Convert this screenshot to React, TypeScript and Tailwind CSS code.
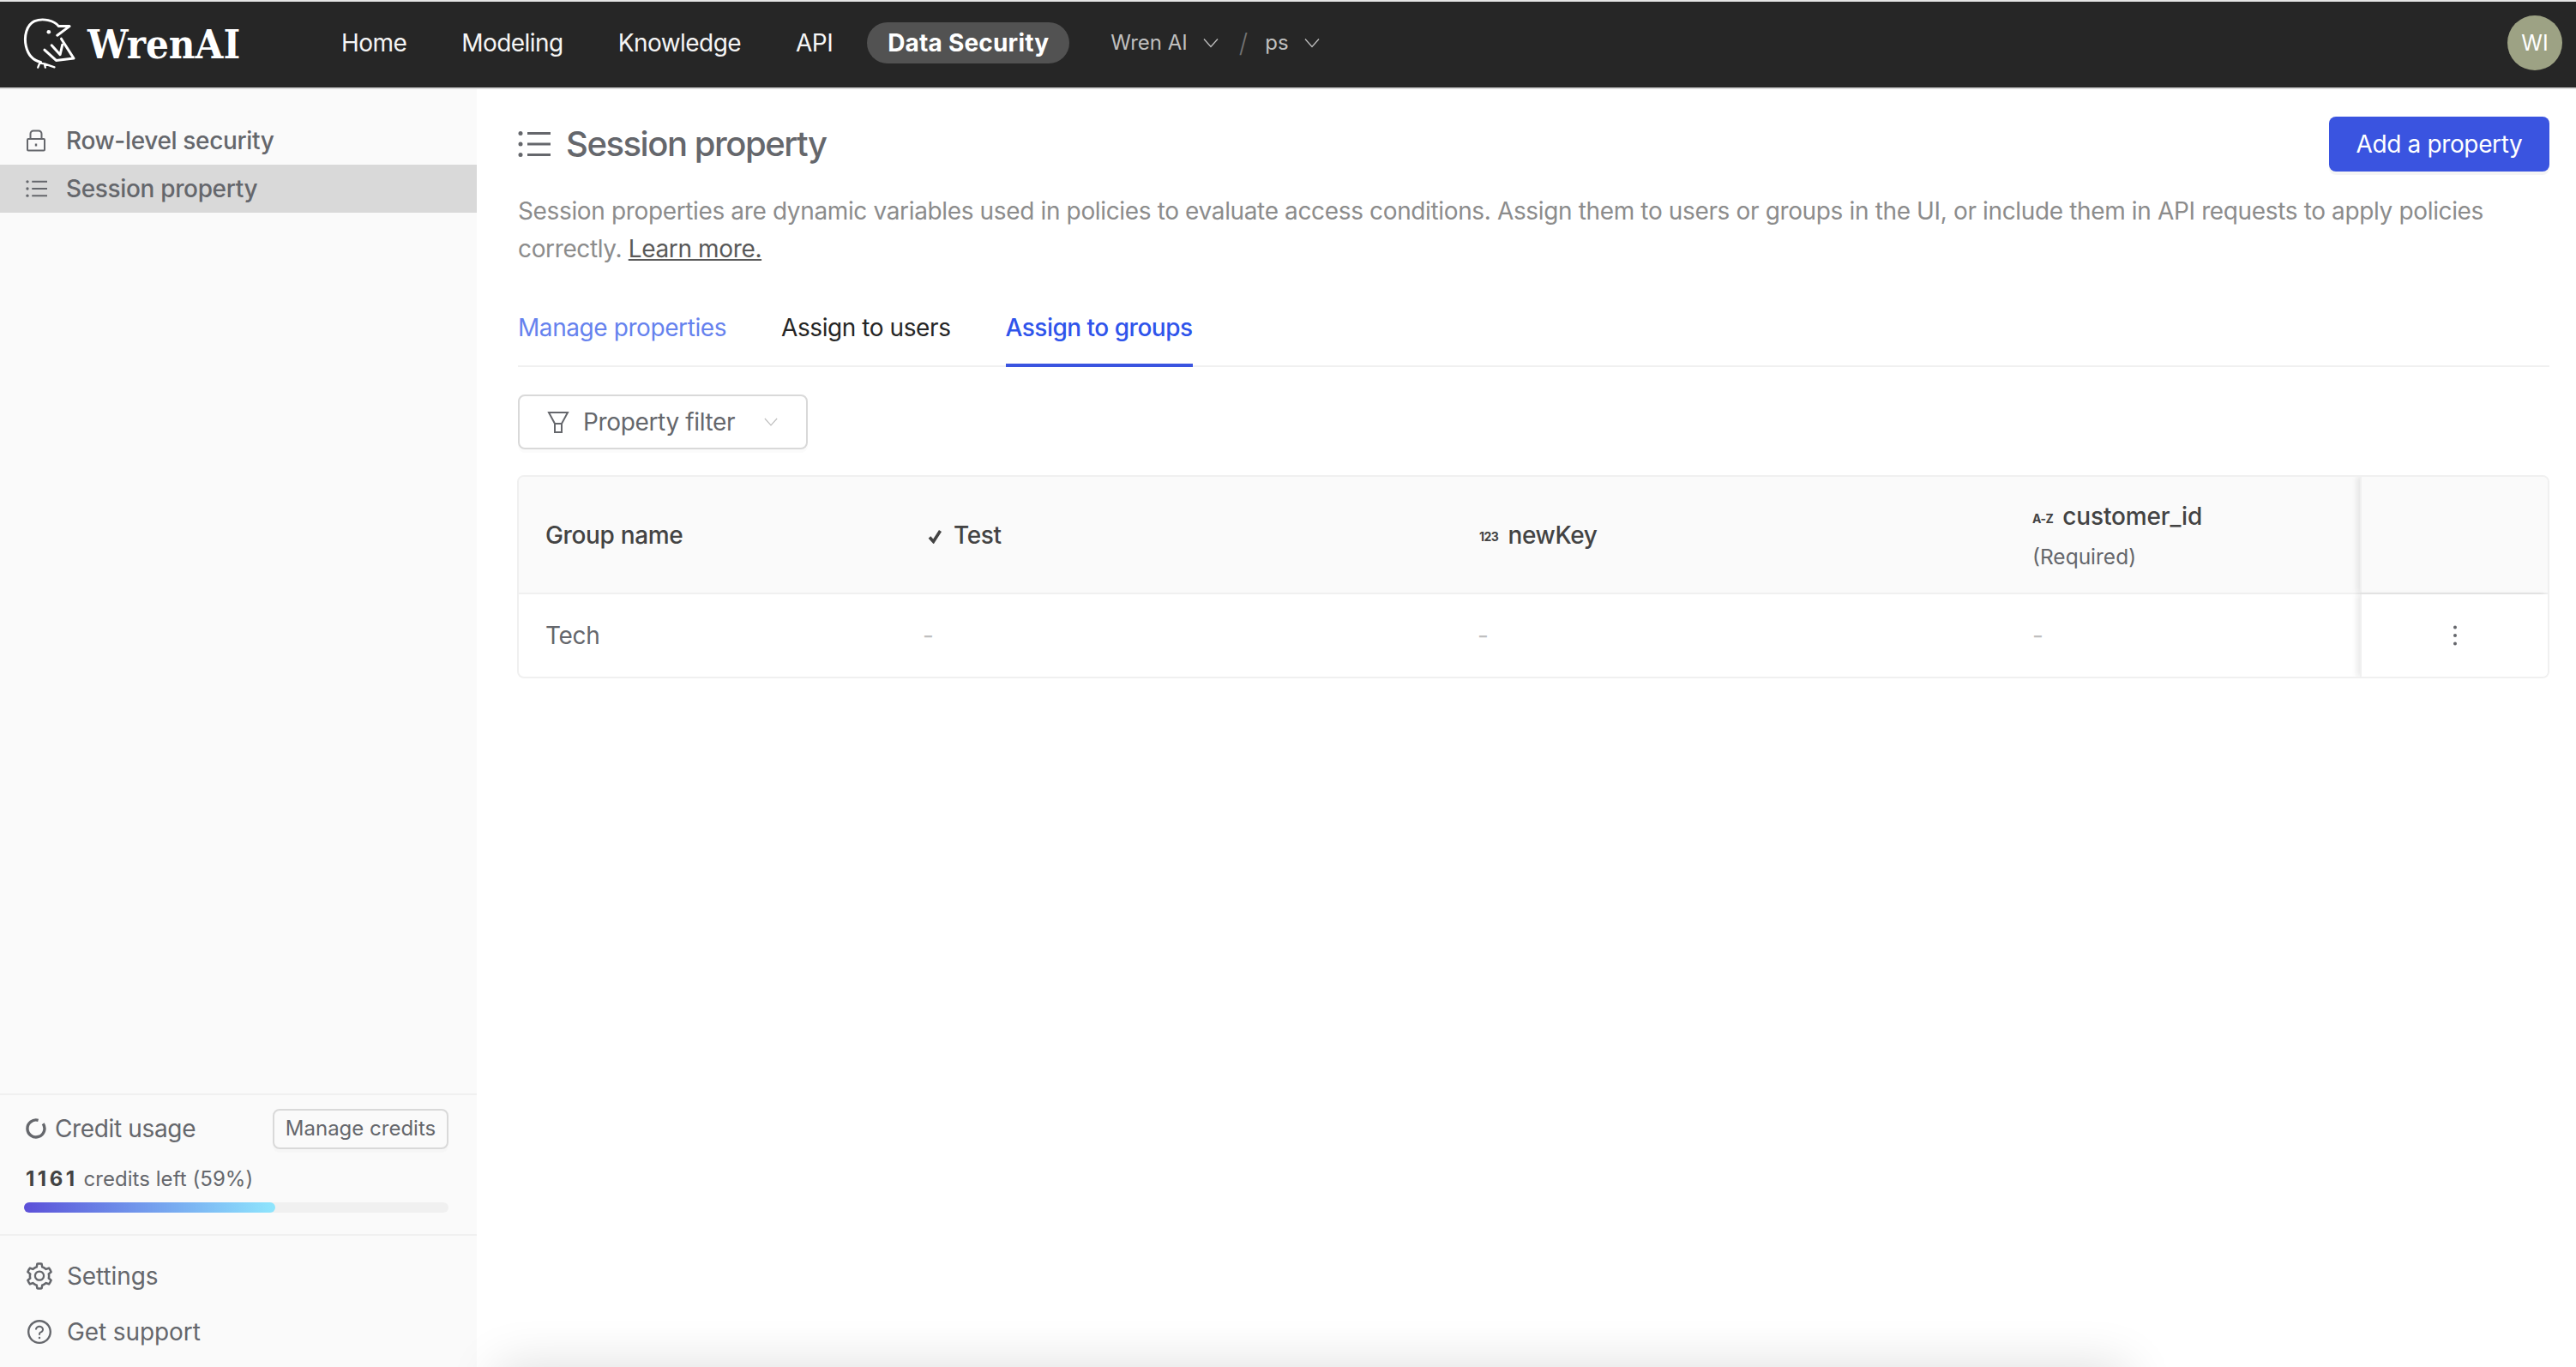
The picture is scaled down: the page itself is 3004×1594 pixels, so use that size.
import { AiOutlineQuestionCircle, AiOutlineSetting } from "react-icons/ai"

const FONT = "font-['Inter','Liberation_Sans',sans-serif]"

function Chevron({ className }: { className: string }) {
  return (
    <svg viewBox="0 0 18 12" className={className} fill="none" stroke="currentColor" strokeWidth="1.3">
      <path d="M1 1.5 9 10.5 17 1.5" />
    </svg>
  )
}

function ListIcon({ className }: { className: string }) {
  return (
    <svg viewBox="0 0 38 30" className={className} fill="none" stroke="currentColor" strokeWidth="2.8">
      <path d="M11 2.5h27M11 15h27M11 27.5h27" />
      <circle cx="3" cy="2.5" r="2.5" fill="currentColor" stroke="none" />
      <circle cx="3" cy="15" r="2.5" fill="currentColor" stroke="none" />
      <circle cx="3" cy="27.5" r="2.5" fill="currentColor" stroke="none" />
    </svg>
  )
}

function LockIcon() {
  return (
    <svg viewBox="0 0 24 26" className="w-[24px] h-[26px]" fill="none" stroke="currentColor" strokeWidth="2">
      <rect x="2" y="11" width="20" height="13.5" rx="1" />
      <path d="M5.5 11V5a3.5 3.5 0 0 1 3.5-3.5h6A3.5 3.5 0 0 1 18.5 5v6" />
      <path d="M12 16.5v3" strokeWidth="2.4" />
    </svg>
  )
}

function FunnelIcon() {
  return (
    <svg viewBox="0 0 26 26" className="w-[26px] h-[26px]" fill="none" stroke="currentColor" strokeWidth="2">
      <path d="M2 2h22l-7 13H9z" />
      <path d="M9 15v10h8V15" />
    </svg>
  )
}

function WrenLogo() {
  return (
    <svg viewBox="80 55 190 190" className="w-[63px] h-[63px] shrink-0" fill="none" stroke="#fff" strokeWidth="9" strokeLinecap="round" strokeLinejoin="round">
      <path d="M200 122 243 90 205 90C190 70 150 60 120 72 92 85 82 125 90 160 97 190 115 210 142 216" />
      <circle cx="170" cy="110" r="7" fill="#fff" stroke="none" />
      <path d="M214 134 258 203 196 210 155 173" />
      <path d="M180 157 210 190 218 155" />
      <path d="M132 235 138 220 155 222 190 234M155 222 158 235" strokeWidth="7" />
    </svg>
  )
}

function NavItem({ label, active }: { label: string; active?: boolean }) {
  return (
    <div className={active ? "h-[48px] px-[24px] flex items-center rounded-full bg-[#525252] text-white font-bold tracking-[0.2px]" : "h-[48px] px-[24px] flex items-center text-[#f5f5f5] tracking-[-0.55px]"}>
      {label}
    </div>
  )
}

function Header() {
  return (
    <header className="h-[100px] shrink-0 bg-[#262626] flex items-center pl-[27px] pr-[16px] pb-[4px] text-[28px] leading-[44px]">
      <div className="w-[347px] flex items-center gap-[12px]">
        <WrenLogo />
        <span className="font-['DejaVu_Serif',serif] font-bold text-white text-[46px] leading-none mt-[4px] origin-left scale-x-[0.92]">WrenAI</span>
      </div>
      <nav className="flex items-center gap-[16px]">
        <NavItem label="Home" />
        <NavItem label="Modeling" />
        <NavItem label="Knowledge" />
        <NavItem label="API" />
        <NavItem label="Data Security" active />
      </nav>
      <div className="ml-[48px] flex items-center text-[24px] text-[#bfbfbf]">
        <span>Wren AI</span>
        <Chevron className="w-[18px] h-[12px] ml-[18px]" />
        <span className="ml-[24px] text-[#737373] text-[30px] font-light">/</span>
        <span className="ml-[20px]">ps</span>
        <Chevron className="w-[18px] h-[12px] ml-[18px]" />
      </div>
      <div className="ml-auto w-[64px] h-[64px] rounded-full bg-[#9da284] text-white text-[25px] flex items-center justify-center">WI</div>
    </header>
  )
}

function Sidebar() {
  return (
    <aside className="w-[556px] shrink-0 bg-[#fafafa] flex flex-col text-[#65676c] text-[28px] tracking-[-0.35px]">
      <div className="pt-[32px] flex-1 font-medium">
        <div className="h-[56px] pl-[30px] flex items-center gap-[23px]">
          <LockIcon />
          <span>Row-level security</span>
        </div>
        <div className="h-[56px] pl-[30px] flex items-center gap-[22px] bg-[#d9d9d9]">
          <ListIcon className="w-[25px] h-[20px]" />
          <span>Session property</span>
        </div>
      </div>
      <div className="border-t-2 border-[#f0f0f0] h-[164px] px-[30px] pt-[15px]">
        <div className="flex items-center justify-between h-[48px] pr-[3px]">
          <div className="flex items-center gap-[10px]">
            <svg viewBox="0 0 24 24" className="w-[24px] h-[24px]" fill="none" stroke="currentColor" strokeWidth="3.4">
              <path d="M20.2 6.3A10 10 0 1 1 14.6 2.3" />
            </svg>
            <span>Credit usage</span>
          </div>
          <div className="w-[205px] h-[47px] border-2 border-[#d9d9d9] rounded-[8px] flex items-center justify-center text-[24px] tracking-normal shadow-[0_4px_0_rgba(0,0,0,0.015)]">Manage credits</div>
        </div>
        <div className="mt-[17px] text-[24px] tracking-[0.05px] leading-[36px]">
          <span className="font-bold text-[#434343] tracking-[3.5px]">1161</span> credits left (59%)
        </div>
        <div className="mt-[9px] -ml-[2px] w-[495px] h-[12px] rounded-full bg-[#f0f0f0]">
          <div className="w-[293px] h-[12px] rounded-full bg-gradient-to-r from-[#5c4fd8] to-[#8fe6fd]" />
        </div>
      </div>
      <div className="border-t-2 border-[#f0f0f0] h-[155px] px-[30px] pt-[15px] tracking-[-0.1px]">
        <div className="h-[64px] flex items-center gap-[14px]">
          <AiOutlineSetting className="w-[36px] h-[36px] -ml-[2px]" />
          <span>Settings</span>
        </div>
        <div className="h-[64px] mt-[1px] flex items-center gap-[16px]">
          <AiOutlineQuestionCircle className="w-[32px] h-[32px]" />
          <span>Get support</span>
        </div>
      </div>
    </aside>
  )
}

function TypeBadge({ label, className }: { label: string; className: string }) {
  return <span className={className}>{label}</span>
}

function SessionTable() {
  return (
    <div className="mt-[30px] -ml-[1px] border-2 border-[#f0f0f0] rounded-[8px] overflow-hidden text-[28px] tracking-[-0.35px]">
      <div className="h-[137px] bg-[#fafafa] border-b-2 border-[#f0f0f0] flex items-center font-medium text-[#434343]">
        <div className="w-[441px] pl-[31px]">Group name</div>
        <div className="w-[647px] pl-[36px] flex items-center gap-[13px]">
          <svg viewBox="0 0 17 16" className="w-[17px] h-[16px] mt-[4px]" fill="none" stroke="currentColor" strokeWidth="3.6">
            <path d="M2 8.5 6.5 13.5 14.5 1" />
          </svg>
          Test
        </div>
        <div className="w-[647px] pl-[32px] flex items-center gap-[11px]">
          <TypeBadge label="123" className="text-[14px] font-bold mt-[4px] tracking-[-0.5px]" />
          newKey
        </div>
        <div className="w-[412px] pl-[30px] h-full flex flex-col justify-center">
          <div className="flex items-center gap-[11px] leading-[44px] tracking-[-0.15px]">
            <TypeBadge label="A-Z" className="text-[14px] font-bold mt-[6px] tracking-[-0.5px]" />
            customer_id
          </div>
          <div className="text-[24.5px] tracking-normal leading-[44px] font-normal text-[#65676c]">(Required)</div>
        </div>
        <div className="flex-1 h-full border-l-2 border-[#f0f0f0] shadow-[-4px_0_6px_rgba(0,0,0,0.08)]" />
      </div>
      <div className="h-[96px] flex items-center text-[#65676c]">
        <div className="w-[441px] pl-[31px]">Tech</div>
        <div className="w-[647px] pl-[30px] text-[#bfbfbf]">-</div>
        <div className="w-[647px] pl-[30px] text-[#bfbfbf]">-</div>
        <div className="w-[412px] pl-[30px] text-[#bfbfbf]">-</div>
        <div className="flex-1 h-full border-l-2 border-[#f0f0f0] shadow-[-4px_0_6px_rgba(0,0,0,0.08)] bg-white flex items-center justify-center">
          <svg viewBox="0 0 4 24" className="w-[4px] h-[24px]" fill="#65676c">
            <circle cx="2" cy="2.5" r="2" />
            <circle cx="2" cy="12" r="2" />
            <circle cx="2" cy="21.5" r="2" />
          </svg>
        </div>
      </div>
    </div>
  )
}

function Main() {
  return (
    <main className="flex-1 min-w-0 pl-[48px] pr-[31px] pt-[32px] text-[28px] tracking-[-0.36px]">
      <div className="flex items-center justify-between h-[64px]">
        <div className="flex items-center gap-[18px] text-[#65676c]">
          <ListIcon className="w-[38px] h-[30px]" />
          <h1 className="text-[40px] tracking-[-1.45px] font-medium">Session property</h1>
        </div>
        <button className="w-[257px] h-[64px] rounded-[8px] bg-[#3a54e0] text-white shadow-[0_4px_0_rgba(0,0,0,0.04)]">Add a property</button>
      </div>
      <p className="mt-[24px] leading-[44px] text-[#8c8c8c]">
        Session properties are dynamic variables used in policies to evaluate access conditions. Assign them to users or groups in the UI, or include them in API requests to apply policies correctly. <span className="underline text-[#595959]">Learn more.</span>
      </p>
      <div className="mt-[27px] h-[89px] border-b-2 border-[#f0f0f0] flex items-start tracking-[-0.42px]">
        <div className="h-[89px] pt-[22px] text-[#6682ee]">Manage properties</div>
        <div className="h-[89px] pt-[22px] ml-[64px] text-[#262626]">Assign to users</div>
        <div className="h-[89px] pt-[22px] ml-[64px] text-[#2f54eb] border-b-4 border-[#3a54e0] font-medium tracking-[-0.5px]">Assign to groups</div>
      </div>
      <div className="mt-[32px] w-[338px] h-[64px] border-2 border-[#d9d9d9] rounded-[8px] flex items-center pl-[32px] text-[#65676c] shadow-[0_4px_0_rgba(0,0,0,0.015)]">
        <FunnelIcon />
        <span className="ml-[16px]">Property filter</span>
        <Chevron className="w-[16px] h-[12px] ml-[34px] text-[#bfbfbf]" />
      </div>
      <SessionTable />
    </main>
  )
}

export default function App() {
  return (
    <div className={`${FONT} relative w-[3004px] h-[1594px] overflow-hidden bg-white flex flex-col`}>
      <div className="h-[2px] shrink-0 bg-[#e5e5e5]" />
      <Header />
      <div className="h-[2px] shrink-0 bg-[#d9d9d9]" />
      <div className="flex-1 min-h-0 flex">
        <Sidebar />
        <Main />
      </div>
      {/* footer bar peeking in from below the page */}
      <div className="absolute left-[600px] w-[1860px] top-[1614px] h-[20px] shadow-[0_0_60px_20px_rgba(0,0,0,0.14)]" />
    </div>
  )
}
